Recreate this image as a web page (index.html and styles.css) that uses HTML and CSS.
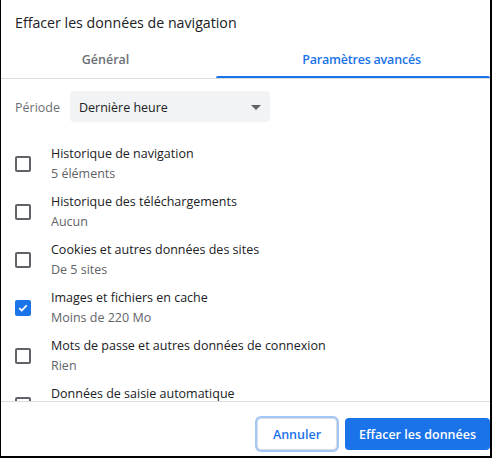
FILE: index.html
```html
<!DOCTYPE html>
<html lang="fr">
<head>
<meta charset="utf-8">
<link rel="stylesheet" href="styles.css">
</head>
<body>
<div class="dialog">
  <div class="title">Effacer les données de navigation</div>
  <div class="tabs">
    <div class="tab tab-general">Général</div>
    <div class="tab tab-advanced active">Paramètres avancés</div>
  </div>
  <div class="content">
    <div class="period">
      <span class="period-label">Période</span>
      <div class="select">
        <span>Dernière heure</span>
        <svg class="arrow" width="10" height="5" viewBox="0 0 10 5"><path d="M0 0h10L5 5z" fill="#5f6368"/></svg>
      </div>
    </div>
    <div class="row">
      <span class="cb"></span>
      <div class="text"><div class="label">Historique de navigation</div><div class="sub">5 éléments</div></div>
    </div>
    <div class="row">
      <span class="cb"></span>
      <div class="text"><div class="label">Historique des téléchargements</div><div class="sub">Aucun</div></div>
    </div>
    <div class="row">
      <span class="cb"></span>
      <div class="text"><div class="label">Cookies et autres données des sites</div><div class="sub">De 5 sites</div></div>
    </div>
    <div class="row">
      <span class="cb checked"><svg width="12" height="12" viewBox="0 0 12 12"><path d="M2.2 6.2l2.5 2.4 5-5.2" fill="none" stroke="#fff" stroke-width="1.8"/></svg></span>
      <div class="text"><div class="label">Images et fichiers en cache</div><div class="sub">Moins de 220 Mo</div></div>
    </div>
    <div class="row">
      <span class="cb"></span>
      <div class="text"><div class="label">Mots de passe et autres données de connexion</div><div class="sub">Rien</div></div>
    </div>
    <div class="row row-last">
      <span class="cb"></span>
      <div class="text"><div class="label">Données de saisie automatique</div></div>
    </div>
  </div>
  <div class="footer">
    <button class="btn cancel">Annuler</button>
    <button class="btn confirm">Effacer les données</button>
  </div>
</div>
</body>
</html>
```
FILE: styles.css
```css
html, body {
  margin: 0;
  padding: 0;
  background: #fff;
}
body {
  font-family: "Open Sans", "Noto Sans", sans-serif;
  font-size: 12.5px;
  color: #202124;
}
.dialog {
  width: 492px;
  height: 458px;
  box-sizing: border-box;
  border-left: 1px solid #000;
  border-right: 2px solid #000;
  border-bottom: 2px solid #000;
  display: flex;
  flex-direction: column;
  overflow: hidden;
  background: #fff;
}
.title {
  height: 40px;
  box-sizing: border-box;
  padding: 13px 0 0 14px;
  font-size: 14.2px;
  line-height: 20px;
  color: #202124;
}
.tabs {
  height: 39px;
  box-sizing: border-box;
  display: flex;
  border-bottom: 1px solid #dadce0;
}
.tab {
  position: relative;
  height: 38px;
  display: flex;
  align-items: center;
  justify-content: center;
  box-sizing: border-box;
  padding-top: 1px;
  font-weight: 600;
  font-size: 12.5px;
  color: #6c7075;
}
.tab-general {
  width: 215px;
  padding-right: 6px;
}
.tab-advanced {
  flex: 1;
  padding-left: 17px;
  letter-spacing: -0.2px;
}
.tab.active {
  color: #1a73e8;
}
.tab.active::after {
  content: "";
  position: absolute;
  left: 0;
  right: 0;
  bottom: 0;
  height: 2px;
  background: #1a73e8;
  border-radius: 2px 2px 0 0;
}
.content {
  flex: 1;
  overflow: hidden;
  padding: 12px 0 0 14px;
}
.period {
  display: flex;
  align-items: center;
  height: 31px;
  margin-bottom: 18px;
}
.period-label {
  width: 55px;
  padding-top: 1px;
  color: #6c7075;
}
.select {
  width: 200px;
  height: 31px;
  box-sizing: border-box;
  background: #f1f3f4;
  border-radius: 4px;
  display: flex;
  align-items: center;
  justify-content: space-between;
  padding: 1px 9px 0 9px;
  color: #202124;
}
.row {
  display: flex;
  align-items: center;
  height: 48px;
}
.row-last {
  align-items: flex-start;
  padding-top: 4px;
  box-sizing: border-box;
}
.row-last .cb {
  margin-top: 13px;
}
.cb {
  width: 16px;
  height: 16px;
  box-sizing: border-box;
  border: 2px solid #5f6368;
  border-radius: 2px;
  margin-right: 20px;
  flex: none;
  display: flex;
  align-items: center;
  justify-content: center;
}
.cb.checked {
  background: #1a73e8;
  border-color: #1a73e8;
}
.text {
  line-height: 20px;
}
.label {
  color: #202124;
}
.sub {
  color: #5f6368;
}
.footer {
  height: 55px;
  box-sizing: border-box;
  border-top: 1px solid #dadce0;
  padding-top: 16px;
  display: flex;
  justify-content: flex-end;
  gap: 8px;
}
.btn {
  height: 32px;
  border-radius: 4px;
  font-family: inherit;
  font-size: 12.5px;
  font-weight: 600;
  padding: 0;
  cursor: pointer;
}
.cancel {
  width: 80px;
  background: #fff;
  color: #1a73e8;
  border: 1px solid #dadce0;
  box-shadow: 0 0 0 2px rgba(26, 115, 232, 0.4);
}
.confirm {
  width: 145px;
  background: #1a73e8;
  color: #fff;
  border: none;
}
```
